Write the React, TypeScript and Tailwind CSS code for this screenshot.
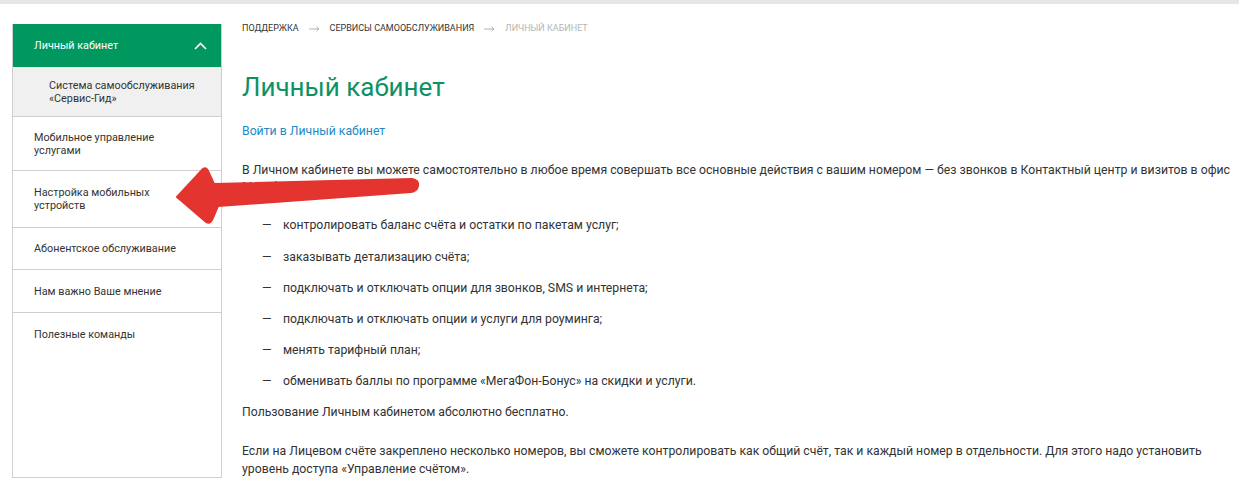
const font = { fontFamily: '"Roboto", "Liberation Sans", sans-serif' };

const menu = [
  { label: 'Мобильное управление\nуслугами', h: 'h-[54px]' },
  { label: 'Настройка мобильных\nустройств', h: 'h-[57px]' },
  { label: 'Абонентское обслуживание', h: 'h-[42px]' },
  { label: 'Нам важно Ваше мнение', h: 'h-[43px]' },
  { label: 'Полезные команды', h: 'h-[43px]' },
];

const actions = [
  'контролировать баланс счёта и остатки по пакетам услуг;',
  'заказывать детализацию счёта;',
  'подключать и отключать опции для звонков, SMS и интернета;',
  'подключать и отключать опции и услуги для роуминга;',
  'менять тарифный план;',
  'обменивать баллы по программе «МегаФон-Бонус» на скидки и услуги.',
];

function Sidebar() {
  return (
    <aside className="ml-[12px] mt-[20px] w-[210px] shrink-0 border border-[#cfcfcf] border-t-0 text-[10.8px] leading-[13px] text-[#333]">
      <div className="flex h-[43px] items-center justify-between bg-[#00985f] pl-[21px] pr-[14px] text-white">
        <span>Личный кабинет</span>
        <svg width="13" height="8" viewBox="0 0 13 8" fill="none">
          <path d="M1 7 L6.5 1.5 L12 7" stroke="#fff" strokeWidth="1.6" />
        </svg>
      </div>
      <div className="flex h-[49px] items-center bg-[#f0f0f0] pl-[36px] whitespace-pre-line">
        {'Система самообслуживания\n«Сервис-Гид»'}
      </div>
      {menu.map((m) => (
        <div
          key={m.label}
          className={`flex ${m.h} items-center border-t border-[#cfcfcf] pl-[21px] whitespace-pre-line`}
        >
          {m.label}
        </div>
      ))}
    </aside>
  );
}

function Crumb() {
  return (
    <svg width="11" height="6" viewBox="0 0 11 6" fill="none">
      <path d="M0 3 H10 M7.5 0.8 L10 3 L7.5 5.2" stroke="#aaa" strokeWidth="0.9" />
    </svg>
  );
}

function Arrow() {
  return (
    <svg className="pointer-events-none absolute left-0 top-0" width="1239" height="492">
      <path
        d="M177 197 L203 169 Q206 167 208 171 L214 184 L412 179 Q419 180 418 186 Q417 191 411 192 L218 206 L212 220 Q209 225 205 221 Z"
        fill="#e3342f"
        stroke="#e3342f"
        strokeWidth="2"
        strokeLinejoin="round"
      />
    </svg>
  );
}

export default function App() {
  return (
    <div className="relative h-[492px] w-[1239px] overflow-hidden bg-white" style={font}>
      <div className="h-[4px] bg-[#e6e6e6]" />
      <div className="flex">
        <Sidebar />
        <main className="w-[1020px] shrink-0 pl-[20px] pt-[18px] text-[12.25px] text-[#333]">
          <div className="flex h-[13px] items-center gap-[10px] text-[9px] uppercase">
            <span className="text-[#333]">Поддержка</span>
            <Crumb />
            <span className="text-[#333]">Сервисы самообслуживания</span>
            <Crumb />
            <span className="text-[#b5b5b5]">Личный кабинет</span>
          </div>
          <h1 className="mt-[35px] text-[26px] leading-[34px] text-[#0e9163]">Личный кабинет</h1>
          <a className="mt-[19px] block leading-[16px] text-[#1c8ac6]">Войти в Личный кабинет</a>
          <p className="mt-[23px] leading-[17px]">
            В Личном кабинете вы можете самостоятельно в любое время совершать все основные действия с вашим номером — без
            звонков в Контактный центр и визитов в офис МегаФона.
          </p>
          <ul className="mt-[14px]">
            {actions.map((a) => (
              <li key={a} className="flex h-[31.2px] items-center pl-[20px]">
                <span className="w-[21px]">—</span>
                <span>{a}</span>
              </li>
            ))}
          </ul>
          <p className="mt-[6px] leading-[18px]">Пользование Личным кабинетом абсолютно бесплатно.</p>
          <p className="mt-[21px] leading-[18px]">
            Если на Лицевом счёте закреплено несколько номеров, вы сможете контролировать как общий счёт, так и каждый номер в
            отдельности. Для этого надо установить уровень доступа «Управление счётом».
          </p>
        </main>
      </div>
      <Arrow />
    </div>
  );
}
